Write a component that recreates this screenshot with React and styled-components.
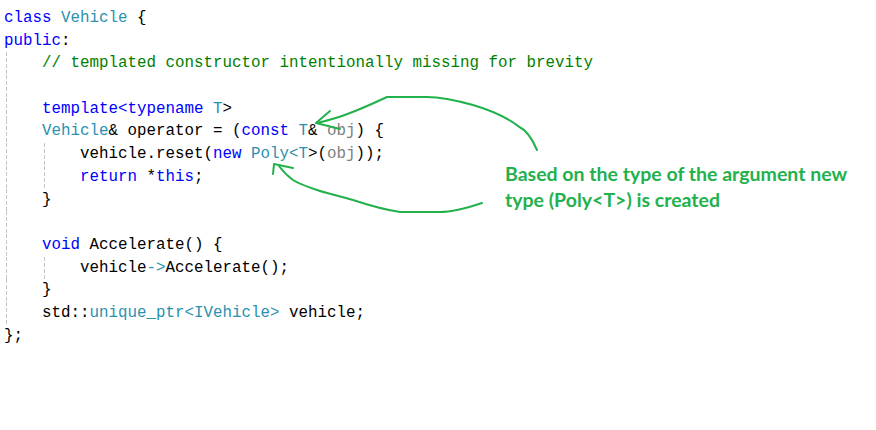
import React from 'react';
import styled, { createGlobalStyle } from 'styled-components';

const GlobalStyle = createGlobalStyle`
  html, body {
    margin: 0;
    padding: 0;
    background: #ffffff;
  }
`;

const Page = styled.div`
  position: relative;
  display: flex;
  align-items: flex-start;
  width: 876px;
  height: 430px;
  overflow: hidden;
  background: #ffffff;
`;

const CodeBlock = styled.pre`
  flex: 0 0 501px;
  min-width: 0;
  overflow: visible;
  margin: 0;
  padding: 7px 0 0 4px;
  font-family: "Liberation Mono", "DejaVu Sans Mono", monospace;
  font-size: 15.83px;
  line-height: 22.7px;
  color: #000000;
`;

const Line = styled.div`
  display: flex;
  height: 22.7px;
  white-space: pre;
`;

const Indent = styled.span`
  flex: 0 0 38px;
  position: relative;

  &::before {
    content: "";
    display: ${({ $guide }) => ($guide ? 'block' : 'none')};
    position: absolute;
    top: 0;
    bottom: 0;
    left: 1.5px;
    width: 1px;
    background: repeating-linear-gradient(
      to bottom,
      #c4c4c4 0,
      #c4c4c4 4px,
      transparent 4px,
      transparent 6px
    );
  }
`;

const colors = {
  kw: '#0000ff',
  type: '#2b91af',
  comment: '#008000',
  param: '#808080',
  plain: '#000000',
};

const Token = styled.span`
  color: ${({ $kind }) => colors[$kind] || colors.plain};
`;

const Note = styled.p`
  margin: 161px 0 0 0;
  white-space: nowrap;
  font-family: "Lato", "Liberation Sans", sans-serif;
  font-weight: 700;
  font-size: 19.5px;
  line-height: 26px;
  color: #22b14c;
`;

const Arrows = styled.svg`
  position: absolute;
  top: 0;
  left: 0;
  pointer-events: none;
`;

// [indent, guides, tokens]
const code = [
  [0, 0, [['class ', 'kw'], ['Vehicle', 'type'], [' {']]],
  [0, 0, [['public', 'kw'], [':']]],
  [1, 1, [['// templated constructor intentionally missing for brevity', 'comment']]],
  [1, 1, []],
  [1, 1, [['template<typename', 'kw'], [' '], ['T', 'type'], ['>']]],
  [1, 1, [['Vehicle', 'type'], ['& operator = ('], ['const', 'kw'], [' '], ['T', 'type'], ['& '], ['obj', 'param'], [') {']]],
  [2, 2, [['vehicle.reset('], ['new', 'kw'], [' '], ['Poly<', 'type'], ['T', 'type'], ['>('], ['obj', 'param'], ['));']]],
  [2, 2, [['return', 'kw'], [' *'], ['this', 'kw'], [';']]],
  [1, 1, [['}']]],
  [1, 1, []],
  [1, 1, [['void', 'kw'], [' Accelerate() {']]],
  [2, 2, [['vehicle'], ['->', 'type'], ['Accelerate();']]],
  [1, 1, [['}']]],
  [1, 1, [['std::'], ['unique_ptr<IVehicle>', 'type'], [' vehicle;']]],
  [0, 0, [['};']]],
];

function CodeLine({ indent, guides, tokens }) {
  const blocks = [];
  for (let i = 0; i < indent; i++) {
    blocks.push(<Indent key={'i' + i} $guide={i < guides} />);
  }
  return (
    <Line>
      {blocks}
      {tokens.map(([text, kind], i) => (
        <Token key={i} $kind={kind}>{text}</Token>
      ))}
    </Line>
  );
}

export default function App() {
  return (
    <>
      <GlobalStyle />
      <Page>
        <CodeBlock>
          {code.map(([indent, guides, tokens], i) => (
            <CodeLine key={i} indent={indent} guides={guides} tokens={tokens} />
          ))}
        </CodeBlock>
        <Note>
          Based on the type of the argument new
          <br />
          type (Poly&lt;T&gt;) is created
        </Note>
        <Arrows width="876" height="430" viewBox="0 0 876 430">
          <g fill="none" stroke="#22b14c" strokeWidth="2" strokeLinecap="round" strokeLinejoin="round">
            <path d="M537 150 C532 138 526 130 518 126 C505 116 490 110 473 105 C455 100 440 97 427 97 L387 97 C372 104 358 110 350 113 C340 117 330 120 317 123" />
            <path d="M330 111 L316 123 L340 129" />
            <path d="M482 203 C470 207 455 212 440 212 L400 212 C380 209 365 204 353 200 C335 195 322 192 317 190 C305 186 296 182 293 180 C286 175 282 170 279 166" />
            <path d="M273 174 L274 164 L293 168" />
          </g>
        </Arrows>
      </Page>
    </>
  );
}
